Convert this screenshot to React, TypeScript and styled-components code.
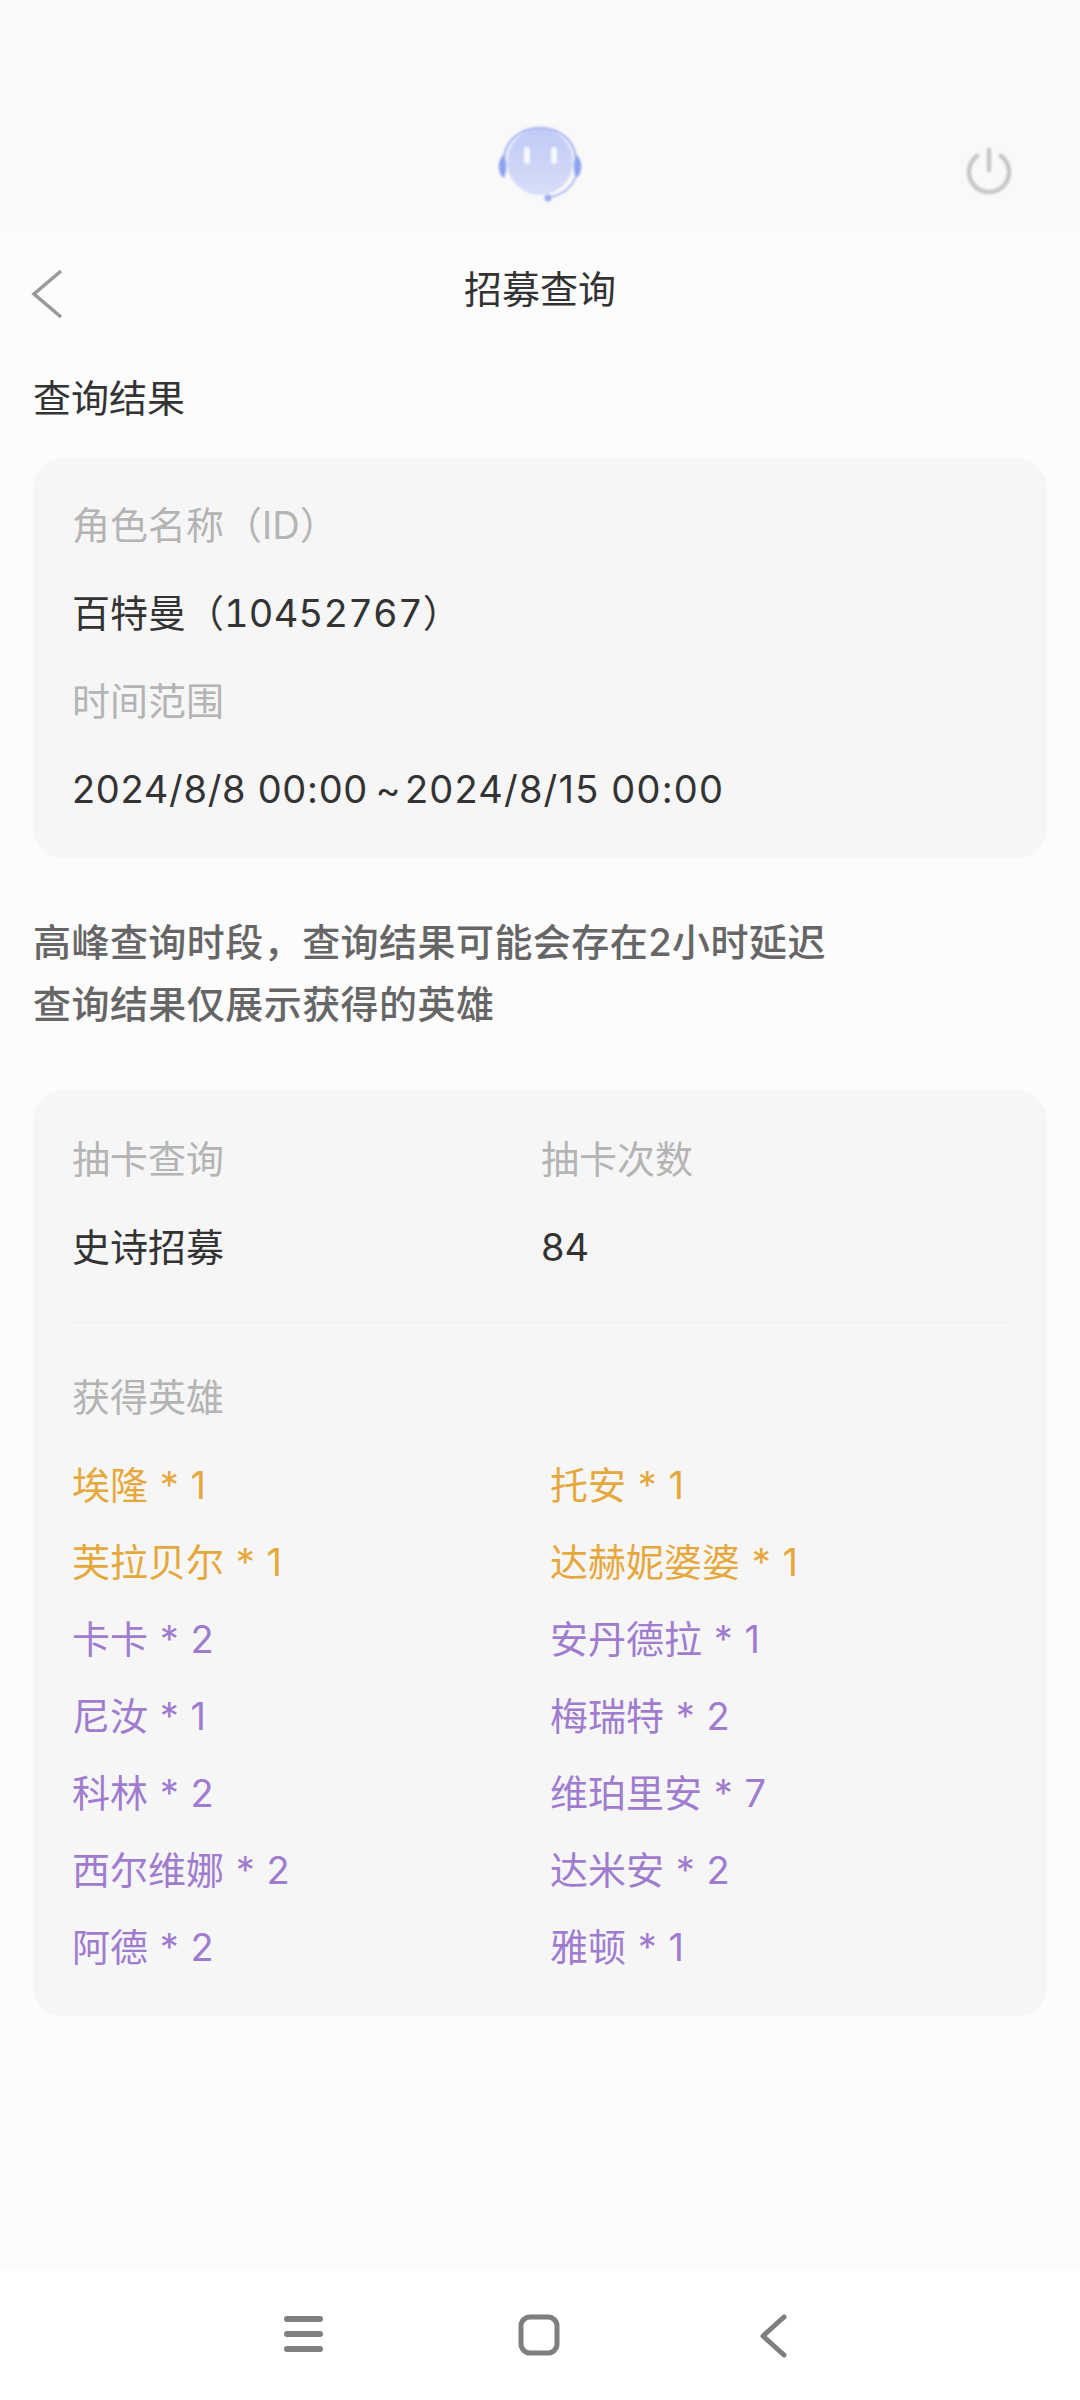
import React from "react";
import styled, { createGlobalStyle } from "styled-components";

const Global = createGlobalStyle`
  html, body { margin: 0; padding: 0; background: #fcfcfc; }
  * { box-sizing: border-box; }
  body { font-family: Inter, "Noto Sans CJK SC", sans-serif; }
`;

const Screen = styled.div`
  width: 1080px;
  height: 2400px;
  display: flex;
  flex-direction: column;
  background: #fcfcfc;
`;

const TopBand = styled.header`
  height: 232px;
  flex: none;
  background: #f9f9f9;
  display: grid;
  grid-template-columns: 1fr 1fr 1fr;
  padding-top: 126px;
`;

const AvatarSlot = styled.div`
  display: flex;
  justify-content: center;
`;

const PowerSlot = styled.div`
  display: flex;
  justify-content: flex-end;
  padding: 20px 67px 0 0;
`;

const TitleBar = styled.div`
  height: 116px;
  flex: none;
  position: relative;
  display: flex;
  align-items: center;
  justify-content: center;
  padding-bottom: 8px;
  font-size: 38px;
  color: #333;
`;

const BackBtn = styled.div`
  position: absolute;
  left: 30px;
  top: 37px;
  display: flex;
`;

const Main = styled.main`
  flex: 1;
  padding: 0 33px;
  display: flex;
  flex-direction: column;
`;

const SectionTitle = styled.div`
  font-size: 38px;
  color: #333;
  line-height: 50px;
  margin-top: 25px;
`;

const Card = styled.section`
  background: #f6f6f6;
  border-radius: 30px;
  padding: 39px 36px 9px 39px;
  margin-top: 35px;
`;

const Line = styled.div<{ $muted?: boolean }>`
  font-size: 38px;
  line-height: 50px;
  height: 88px;
  padding-top: 3px;
  color: ${(p) => (p.$muted ? "#b4b4b4" : "#333")};
  white-space: pre;
`;

const PlayerId = styled.span`
  font-variant-numeric: tabular-nums;
  letter-spacing: 0.2px;
`;

const Stamp = styled.span<{ $spacing: number }>`
  letter-spacing: ${(p) => p.$spacing}px;
`;

const Tilde = styled.span`
  letter-spacing: -3.2px;
`;

const Note = styled.div`
  margin-top: 53px;
  font-size: 38px;
  font-weight: 500;
  letter-spacing: 0.45px;
  line-height: 62px;
  color: #666;
`;

const ResultCard = styled(Card)`
  margin-top: 55px;
  padding: 41px 36px 17px 39px;
`;

const TwoCols = styled.div`
  display: grid;
  grid-template-columns: 469px 1fr;
`;

const Divider = styled.div`
  height: 1px;
  background: #eeeeee;
  margin: 15px 0 46px;
`;

const HeroGrid = styled.div`
  display: grid;
  grid-template-columns: 478px 1fr;
  grid-auto-rows: 77px;
  margin-top: 3px;
`;

const Hero = styled.div<{ $tone: "gold" | "purple" }>`
  font-size: 38px;
  line-height: 50px;
  white-space: pre;
  word-spacing: 1px;
  color: ${(p) => (p.$tone === "gold" ? "#e6a83c" : "#a07ccf")};
`;

const NavBar = styled.nav`
  height: 130px;
  flex: none;
  background: #fff;
  display: flex;
  align-items: flex-start;
  padding-top: 0;
`;

const NavSlot = styled.div<{ $x: number }>`
  position: absolute;
  left: ${(p) => p.$x}px;
  top: 2314px;
  display: flex;
`;

const BlurredIcon = styled.svg`
  filter: blur(1px);
`;

const heroes: [string, "gold" | "purple"][] = [
  ["埃隆 * 1", "gold"], ["托安 * 1", "gold"],
  ["芙拉贝尔 * 1", "gold"], ["达赫妮婆婆 * 1", "gold"],
  ["卡卡 * 2", "purple"], ["安丹德拉 * 1", "purple"],
  ["尼汝 * 1", "purple"], ["梅瑞特 * 2", "purple"],
  ["科林 * 2", "purple"], ["维珀里安 * 7", "purple"],
  ["西尔维娜 * 2", "purple"], ["达米安 * 2", "purple"],
  ["阿德 * 2", "purple"], ["雅顿 * 1", "purple"],
];

const Avatar = () => (
  <BlurredIcon width="90" height="78" viewBox="0 0 90 78">
    <defs>
      <linearGradient id="face" x1="0" y1="0" x2="0" y2="1">
        <stop offset="0" stopColor="#c0caf6" />
        <stop offset="1" stopColor="#d8def9" />
      </linearGradient>
    </defs>
    <circle cx="45" cy="36" r="33" fill="url(#face)" />
    <path d="M9 32C11 13 27 2 45 2s34 11 36 30" fill="none" stroke="#aab7f3" strokeWidth="2.5" />
    <path d="M9 29C2 33 2 48 9 52c3-7 3-16 0-23z" fill="#8fa3ee" />
    <path d="M81 29c7 4 7 19 0 23-3-7-3-16 0-23z" fill="#8fa3ee" />
    <path d="M81 50C76 63 66 69 55 71" fill="none" stroke="#a9b6f2" strokeWidth="2" />
    <circle cx="53" cy="72" r="3.5" fill="#9cadf0" />
    <rect x="29" y="21" width="6" height="17" rx="3" fill="#fff" opacity="0.85" />
    <rect x="56" y="21" width="6" height="17" rx="3" fill="#fff" opacity="0.85" />
  </BlurredIcon>
);

export default function App() {
  return (
    <Screen>
      <Global />
      <TopBand>
        <span />
        <AvatarSlot><Avatar /></AvatarSlot>
        <PowerSlot>
          <BlurredIcon width="48" height="48" viewBox="0 0 48 48" fill="none" stroke="#c6c6c6" strokeWidth="4.5" strokeLinecap="round">
            <path d="M12 10A20 20 0 1 0 36 10" />
            <path d="M24 4v20" />
          </BlurredIcon>
        </PowerSlot>
      </TopBand>
      <TitleBar>
        <BackBtn>
          <svg width="34" height="50" viewBox="0 0 34 50" fill="none" stroke="#999" strokeWidth="3.5">
            <path d="M31 2 4 25l27 23" />
          </svg>
        </BackBtn>
        招募查询
      </TitleBar>
      <Main>
        <SectionTitle>查询结果</SectionTitle>
        <Card>
          <Line $muted>角色名称（ID）</Line>
          <Line>百特曼（<PlayerId>10452767</PlayerId>）</Line>
          <Line $muted>时间范围</Line>
          <Line>
            <Stamp $spacing={0.7}>2024/8/8 00:00</Stamp>
            <Tilde> ~ </Tilde>
            <Stamp $spacing={1.2}>2024/8/15 00:00</Stamp>
          </Line>
        </Card>
        <Note>
          高峰查询时段，查询结果可能会存在2小时延迟
          <br />
          查询结果仅展示获得的英雄
        </Note>
        <ResultCard>
          <TwoCols>
            <Line $muted>抽卡查询</Line>
            <Line $muted>抽卡次数</Line>
            <Line>史诗招募</Line>
            <Line>84</Line>
          </TwoCols>
          <Divider />
          <Line $muted>获得英雄</Line>
          <HeroGrid>
            {heroes.map(([t, tone]) => (
              <Hero key={t} $tone={tone}>{t}</Hero>
            ))}
          </HeroGrid>
        </ResultCard>
      </Main>
      <NavBar>
        <NavSlot $x={284}>
          <svg width="40" height="40" viewBox="0 0 40 40" stroke="#7f7f7f" strokeWidth="6" strokeLinecap="round">
            <path d="M3 5h33M3 20h33M3 35h33" />
          </svg>
        </NavSlot>
        <NavSlot $x={518}>
          <svg width="42" height="42" viewBox="0 0 42 42" fill="none" stroke="#7f7f7f" strokeWidth="5">
            <rect x="3" y="3" width="36" height="36" rx="9" />
          </svg>
        </NavSlot>
        <NavSlot $x={758}>
          <svg width="32" height="44" viewBox="0 0 32 44" fill="none" stroke="#7f7f7f" strokeWidth="5" strokeLinecap="round" strokeLinejoin="round">
            <path d="M26 3 5 22l21 19" />
          </svg>
        </NavSlot>
      </NavBar>
    </Screen>
  );
}
